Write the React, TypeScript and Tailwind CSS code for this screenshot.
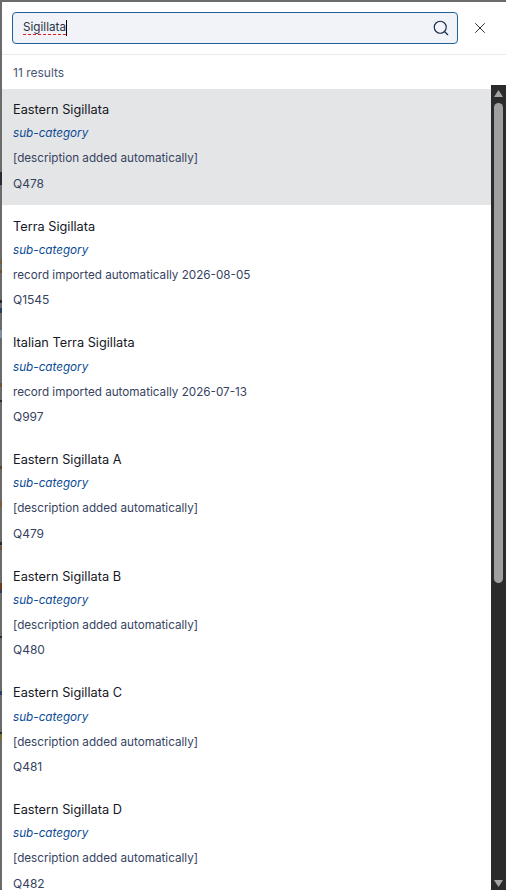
import { Search, X } from 'lucide-react';

const results = [
  { name: 'Eastern Sigillata', desc: '[description added automatically]', id: 'Q478' },
  { name: 'Terra Sigillata', desc: 'record imported automatically 2026-08-05', id: 'Q1545' },
  { name: 'Italian Terra Sigillata', desc: 'record imported automatically 2026-07-13', id: 'Q997' },
  { name: 'Eastern Sigillata A', desc: '[description added automatically]', id: 'Q479' },
  { name: 'Eastern Sigillata B', desc: '[description added automatically]', id: 'Q480' },
  { name: 'Eastern Sigillata C', desc: '[description added automatically]', id: 'Q481' },
  { name: 'Eastern Sigillata D', desc: '[description added automatically]', id: 'Q482' },
];

// bits of the dimmed page showing along the left edge of the dialog
const backdropSpecks = [
  { top: 172, height: 13, color: '#2a2a30' },
  { top: 260, height: 4, color: '#7a5c3a' },
  { top: 270, height: 3, color: '#6f5535' },
  { top: 300, height: 3, color: '#26262c' },
  { top: 308, height: 5, color: '#2c3f63' },
  { top: 330, height: 8, color: '#7f8fa3' },
  { top: 383, height: 4, color: '#6f5535' },
  { top: 400, height: 2, color: '#2a2a30' },
  { top: 466, height: 3, color: '#5a4632' },
  { top: 501, height: 6, color: '#7a5c3a' },
  { top: 542, height: 3, color: '#2a2a30' },
  { top: 546, height: 4, color: '#6f5535' },
  { top: 583, height: 7, color: '#6b3a20' },
  { top: 590, height: 3, color: '#2c3f63' },
  { top: 636, height: 2, color: '#2a2a30' },
  { top: 691, height: 4, color: '#2c3f63' },
  { top: 732, height: 2, color: '#2a2a30' },
  { top: 734, height: 6, color: '#7a6a3a' },
];

function Scrollbar() {
  return (
    <div className="mt-[30px] flex w-[15px] shrink-0 flex-col items-center bg-[#2b2b2b]">
      <svg width="11" height="10" viewBox="0 0 11 10" className="mt-[4px] shrink-0">
        <path d="M5.5 1 L10 8 L1 8 Z" fill="#a3a3a3" />
      </svg>
      <div className="mt-[4px] h-[480px] w-[9px] shrink-0 rounded-full bg-[#9f9f9f]" />
      <svg width="11" height="10" viewBox="0 0 11 10" className="mt-auto mb-[2px] shrink-0">
        <path d="M5.5 9 L10 2 L1 2 Z" fill="#a3a3a3" />
      </svg>
    </div>
  );
}

export default function App() {
  return (
    <div className="relative h-[890px] w-[506px] overflow-hidden bg-[#6b6b6b] pt-[2px] pl-[2px] font-['Inter',sans-serif]">
      {backdropSpecks.map((s) => (
        <div key={s.top} className="absolute left-0 w-[2px]" style={{ top: s.top, height: s.height, backgroundColor: s.color }} />
      ))}
      <div className="flex h-[888px] flex-col bg-white">
        {/* search header */}
        <div className="flex h-[53px] shrink-0 items-center gap-[13px] border-b border-[#e9eaec] pr-[17px] pl-[10px]">
          <div className="flex h-[32px] flex-1 items-center rounded-[4px] border border-[#1f5f9e] bg-[#f1f3f8] pr-[7px] pl-[10px]">
            <span className="text-[11.7px] text-[#2b3245] underline decoration-[#e02020] decoration-dashed underline-offset-[3px]">Sigillata</span>
            <span className="h-[16px] w-px bg-black" />
            <Search className="ml-auto h-[18px] w-[18px] text-[#14284b]" strokeWidth={1.5} />
          </div>
          <X className="h-[18px] w-[18px] text-[#222]" strokeWidth={1.25} />
        </div>
        {/* list + scrollbar */}
        <div className="flex min-h-0 flex-1">
          <div className="min-w-0 flex-1">
            <div className="flex h-[34px] items-center pt-[2px] pl-[11px] text-xs text-[#4a5670]">11 results</div>
            {results.map((r, i) => (
              <div key={r.id} className={`flex flex-col px-[11px] pt-[12px] ${i === 0 ? 'mb-[0.67px] h-[116px] bg-[#e4e5e7]' : 'h-[116.67px]'}`}>
                <div className="h-[18px] text-[12.75px] leading-[18px] text-[#15181f]">{r.name}</div>
                <div className="mt-[5.4px] h-[18px] text-[11.7px] leading-[18px] text-[#0a4a94] italic">sub-category</div>
                <div className="mt-[7px] h-[18px] text-[11.7px] leading-[18px] text-[#36435f]">{r.desc}</div>
                <div className="mt-[7.3px] h-[18px] text-xs leading-[18px] text-[#36435f]">{r.id}</div>
              </div>
            ))}
          </div>
          <Scrollbar />
        </div>
      </div>
    </div>
  );
}
